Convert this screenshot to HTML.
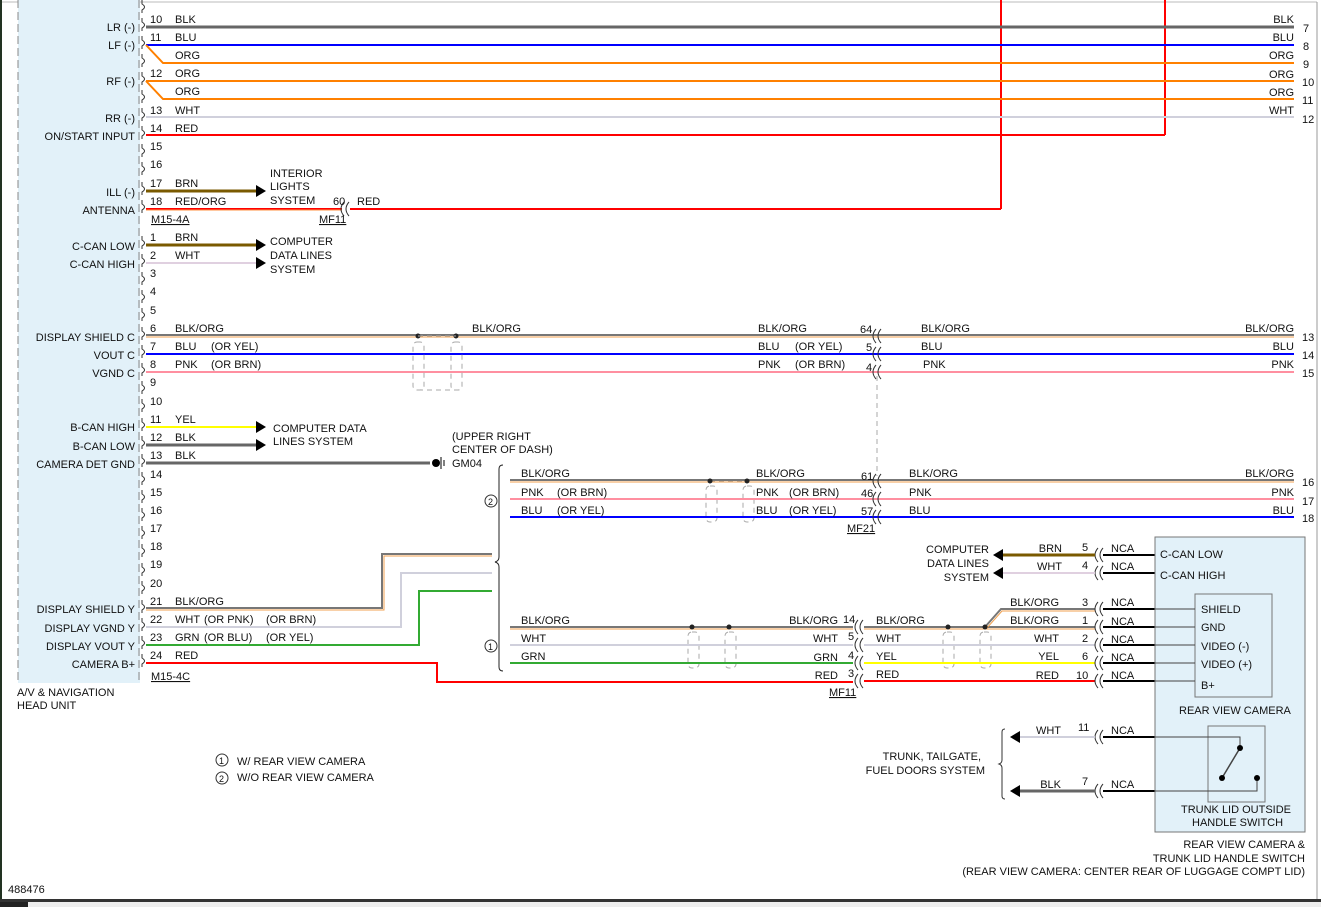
<!DOCTYPE html>
<html><head><meta charset="utf-8"><style>
html,body{margin:0;padding:0;background:#fff;}
svg{display:block}
text{font-family:"Liberation Sans",Arial,sans-serif;font-size:11px;fill:#111}
.r{text-anchor:end}
.u{text-decoration:underline}
</style></head><body>
<svg width="1321" height="907" viewBox="0 0 1321 907" xmlns="http://www.w3.org/2000/svg">
<defs>
<path id="p" d="M142,-9 v4 q5,3 0,6 v3" fill="none" stroke="#333" stroke-width="1"/>
<g id="c" fill="none" stroke="#333" stroke-width="1"><path d="M-1,-7 q-6,7 0,14"/><path d="M4,-7 q-6,7 0,14"/></g>
<polygon id="ar" points="0,-6 10,0 0,6" fill="#000"/>
<polygon id="al" points="0,-6 -10,0 0,6" fill="#000"/>
</defs>
<rect x="0" y="0" width="1321" height="907" fill="#fff"/>
<line x1="1" y1="0" x2="1" y2="900" stroke="#223322" stroke-width="2"/>
<line x1="2" y1="2" x2="1317" y2="2" stroke="#bbb"/>
<line x1="1317" y1="2" x2="1317" y2="900" stroke="#999"/>
<rect x="0" y="899" width="1321" height="3" fill="#333"/>
<rect x="0" y="902" width="28" height="5" fill="#222"/>
<rect x="28" y="902" width="1293" height="5" fill="#eee"/>

<!-- head unit -->
<rect x="18" y="0" width="122" height="683" fill="#e2f1f9"/>
<line x1="18" y1="0" x2="18" y2="683" stroke="#888" stroke-dasharray="8,4"/>
<line x1="139" y1="0" x2="139" y2="683" stroke="#888" stroke-dasharray="8,4"/>
<text x="17" y="696">A/V &amp; NAVIGATION</text>
<text x="17" y="709">HEAD UNIT</text>

<!-- pins top connector -->
<g>
<use href="#p" y="9"/><use href="#p" y="27"/><use href="#p" y="45"/><use href="#p" y="63"/><use href="#p" y="81"/><use href="#p" y="99"/><use href="#p" y="117"/><use href="#p" y="135"/><use href="#p" y="153"/><use href="#p" y="171"/><use href="#p" y="191"/><use href="#p" y="209"/>
<use href="#p" y="245"/><use href="#p" y="263"/><use href="#p" y="281"/><use href="#p" y="299"/><use href="#p" y="317"/><use href="#p" y="336"/><use href="#p" y="354"/><use href="#p" y="372"/><use href="#p" y="390"/><use href="#p" y="408"/><use href="#p" y="427"/><use href="#p" y="445"/><use href="#p" y="463"/><use href="#p" y="481"/><use href="#p" y="499"/><use href="#p" y="517"/><use href="#p" y="535"/><use href="#p" y="553"/><use href="#p" y="572"/><use href="#p" y="590"/><use href="#p" y="609"/><use href="#p" y="627"/><use href="#p" y="645"/><use href="#p" y="663"/>
</g>

<!-- top wires -->
<line x1="1001" y1="0" x2="1001" y2="209" stroke="#f00" stroke-width="2"/>
<line x1="1165" y1="0" x2="1165" y2="135" stroke="#f00" stroke-width="2"/>
<line x1="146" y1="27" x2="1294" y2="27" stroke="#666" stroke-width="3"/>
<line x1="146" y1="45" x2="1294" y2="45" stroke="#00f" stroke-width="2"/>
<polyline points="146,45 163,63 1294,63" fill="none" stroke="#ff8000" stroke-width="2"/>
<line x1="146" y1="81" x2="1294" y2="81" stroke="#ff8000" stroke-width="2"/>
<polyline points="146,81 163,99 1294,99" fill="none" stroke="#ff8000" stroke-width="2"/>
<line x1="146" y1="117" x2="1294" y2="117" stroke="#d0d0dc" stroke-width="2"/>
<polyline points="146,135 1165,135" fill="none" stroke="#f00" stroke-width="2"/>
<line x1="146" y1="191" x2="256" y2="191" stroke="#7a5a00" stroke-width="3"/>
<use href="#ar" x="256" y="191"/>
<line x1="146" y1="209" x2="342" y2="209" stroke="#f00" stroke-width="2"/>
<line x1="146" y1="210" x2="342" y2="210" stroke="#ff9040" stroke-width="1"/>
<line x1="350" y1="209" x2="1001" y2="209" stroke="#f00" stroke-width="2"/>
<use href="#c" x="345" y="209"/>

<text x="150" y="23">10</text><text x="175" y="23">BLK</text>
<text x="150" y="41">11</text><text x="175" y="41">BLU</text>
<text x="175" y="59">ORG</text>
<text x="150" y="77">12</text><text x="175" y="77">ORG</text>
<text x="175" y="95">ORG</text>
<text x="150" y="114">13</text><text x="175" y="114">WHT</text>
<text x="150" y="132">14</text><text x="175" y="132">RED</text>
<text x="150" y="150">15</text><text x="150" y="168">16</text>
<text x="150" y="187">17</text><text x="175" y="187">BRN</text>
<text x="150" y="205">18</text><text x="175" y="205">RED/ORG</text>
<text x="151" y="223" class="u">M15-4A</text>
<text x="270" y="177">INTERIOR</text><text x="270" y="190">LIGHTS</text><text x="270" y="204">SYSTEM</text>
<text x="333" y="205">60</text><text x="357" y="205">RED</text>
<text x="319" y="223" class="u">MF11</text>

<text x="135" y="31" class="r">LR (-)</text>
<text x="135" y="49" class="r">LF (-)</text>
<text x="135" y="85" class="r">RF (-)</text>
<text x="135" y="122" class="r">RR (-)</text>
<text x="135" y="140" class="r">ON/START INPUT</text>
<text x="135" y="196" class="r">ILL (-)</text>
<text x="135" y="214" class="r">ANTENNA</text>

<text x="1294" y="23" class="r">BLK</text><text x="1303" y="32">7</text>
<text x="1294" y="41" class="r">BLU</text><text x="1303" y="50">8</text>
<text x="1294" y="59" class="r">ORG</text><text x="1303" y="68">9</text>
<text x="1294" y="78" class="r">ORG</text><text x="1302" y="86">10</text>
<text x="1294" y="96" class="r">ORG</text><text x="1302" y="104">11</text>
<text x="1294" y="114" class="r">WHT</text><text x="1302" y="123">12</text>

<!-- second connector -->
<line x1="146" y1="245" x2="256" y2="245" stroke="#7a5a00" stroke-width="3"/><use href="#ar" x="256" y="245"/>
<line x1="146" y1="263" x2="256" y2="263" stroke="#e0d0e0" stroke-width="2"/><use href="#ar" x="256" y="263"/>
<text x="150" y="241">1</text><text x="175" y="241">BRN</text>
<text x="150" y="259">2</text><text x="175" y="259">WHT</text>
<text x="150" y="277">3</text><text x="150" y="295">4</text><text x="150" y="314">5</text>
<text x="270" y="245">COMPUTER</text><text x="270" y="259">DATA LINES</text><text x="270" y="273">SYSTEM</text>
<text x="135" y="250" class="r">C-CAN LOW</text>
<text x="135" y="268" class="r">C-CAN HIGH</text>

<!-- display C -->
<line x1="146" y1="335" x2="1294" y2="335" stroke="#777" stroke-width="2"/>
<line x1="146" y1="337" x2="1294" y2="337" stroke="#f0a050" stroke-width="1"/>
<line x1="146" y1="354" x2="1294" y2="354" stroke="#00f" stroke-width="2"/>
<line x1="146" y1="372" x2="1294" y2="372" stroke="#ff8fa0" stroke-width="2"/>
<circle cx="418" cy="336" r="2.5" fill="#222"/><circle cx="456" cy="336" r="2.5" fill="#222"/>
<g fill="none" stroke="#aaa" stroke-dasharray="5,4">
<line x1="418" y1="336" x2="456" y2="336"/>
<rect x="413" y="342" width="11" height="48" rx="4"/><rect x="451" y="342" width="11" height="48" rx="4"/>
<line x1="418" y1="390" x2="456" y2="390"/>
<line x1="877" y1="376" x2="877" y2="476"/>
<rect x="706" y="486" width="11" height="36" rx="4"/><rect x="743" y="486" width="11" height="36" rx="4"/>
<line x1="710" y1="481" x2="747" y2="481"/>
<rect x="688" y="632" width="11" height="36" rx="4"/><rect x="725" y="632" width="11" height="36" rx="4"/>
<line x1="692" y1="627" x2="729" y2="627"/>
<rect x="943" y="632" width="11" height="36" rx="4"/><rect x="980" y="632" width="11" height="36" rx="4"/>
<line x1="948" y1="627" x2="985" y2="627"/>
</g>
<use href="#c" x="877" y="336"/><use href="#c" x="877" y="354"/><use href="#c" x="877" y="372"/>
<text x="150" y="332">6</text><text x="175" y="332">BLK/ORG</text>
<text x="150" y="350">7</text><text x="175" y="350">BLU</text><text x="211" y="350">(OR YEL)</text>
<text x="150" y="368">8</text><text x="175" y="368">PNK</text><text x="211" y="368">(OR BRN)</text>
<text x="150" y="386">9</text><text x="150" y="405">10</text>
<text x="472" y="332">BLK/ORG</text>
<text x="758" y="332">BLK/ORG</text><text x="860" y="333">64</text>
<text x="758" y="350">BLU</text><text x="795" y="350">(OR YEL)</text><text x="866" y="351">5</text>
<text x="758" y="368">PNK</text><text x="795" y="368">(OR BRN)</text><text x="866" y="371">4</text>
<text x="921" y="332">BLK/ORG</text><text x="921" y="350">BLU</text><text x="923" y="368">PNK</text>
<text x="1294" y="332" class="r">BLK/ORG</text><text x="1302" y="341">13</text>
<text x="1294" y="350" class="r">BLU</text><text x="1302" y="359">14</text>
<text x="1294" y="368" class="r">PNK</text><text x="1302" y="377">15</text>
<text x="135" y="341" class="r">DISPLAY SHIELD C</text>
<text x="135" y="359" class="r">VOUT C</text>
<text x="135" y="377" class="r">VGND C</text>

<!-- B-CAN -->
<line x1="146" y1="427" x2="256" y2="427" stroke="#ff0" stroke-width="2"/><use href="#ar" x="256" y="427"/>
<line x1="146" y1="445" x2="256" y2="445" stroke="#666" stroke-width="3"/><use href="#ar" x="256" y="445"/>
<line x1="146" y1="463" x2="430" y2="463" stroke="#666" stroke-width="3"/>
<circle cx="436" cy="463" r="4" fill="#000"/><line x1="441" y1="457" x2="441" y2="469" stroke="#000"/><line x1="444" y1="460" x2="444" y2="466" stroke="#000"/>
<text x="452" y="440">(UPPER RIGHT</text><text x="452" y="453">CENTER OF DASH)</text><text x="452" y="467">GM04</text>
<text x="150" y="423">11</text><text x="175" y="423">YEL</text>
<text x="150" y="441">12</text><text x="175" y="441">BLK</text>
<text x="150" y="459">13</text><text x="175" y="459">BLK</text>
<text x="273" y="432">COMPUTER DATA</text><text x="273" y="445">LINES SYSTEM</text>
<text x="135" y="431" class="r">B-CAN HIGH</text>
<text x="135" y="450" class="r">B-CAN LOW</text>
<text x="135" y="468" class="r">CAMERA DET GND</text>
<text x="150" y="478">14</text><text x="150" y="496">15</text><text x="150" y="514">16</text><text x="150" y="532">17</text><text x="150" y="550">18</text><text x="150" y="568">19</text><text x="150" y="587">20</text>

<!-- option 2 -->
<line x1="510" y1="480" x2="1294" y2="480" stroke="#777" stroke-width="2"/>
<line x1="510" y1="482" x2="1294" y2="482" stroke="#f0a050" stroke-width="1"/>
<line x1="510" y1="499" x2="1294" y2="499" stroke="#ff8fa0" stroke-width="2"/>
<line x1="510" y1="517" x2="1294" y2="517" stroke="#00f" stroke-width="2"/>
<circle cx="710" cy="481" r="2.5" fill="#222"/><circle cx="747" cy="481" r="2.5" fill="#222"/>
<use href="#c" x="877" y="481"/><use href="#c" x="877" y="499"/><use href="#c" x="877" y="517"/>
<text x="521" y="477">BLK/ORG</text>
<text x="521" y="496">PNK</text><text x="557" y="496">(OR BRN)</text>
<text x="521" y="514">BLU</text><text x="557" y="514">(OR YEL)</text>
<text x="756" y="477">BLK/ORG</text>
<text x="756" y="496">PNK</text><text x="789" y="496">(OR BRN)</text>
<text x="756" y="514">BLU</text><text x="789" y="514">(OR YEL)</text>
<text x="861" y="480">61</text><text x="861" y="497">46</text><text x="861" y="515">57</text>
<text x="847" y="532" class="u">MF21</text>
<text x="909" y="477">BLK/ORG</text><text x="909" y="496">PNK</text><text x="909" y="514">BLU</text>
<text x="1294" y="477" class="r">BLK/ORG</text><text x="1302" y="486">16</text>
<text x="1294" y="496" class="r">PNK</text><text x="1302" y="505">17</text>
<text x="1294" y="514" class="r">BLU</text><text x="1302" y="522">18</text>
<path d="M503,465 q-4,0 -4,4 v88 q0,4 -4,5 q4,1 4,5 v100 q0,4 4,4" fill="none" stroke="#222"/>
<circle cx="491" cy="501" r="6" fill="none" stroke="#333"/><text x="488" y="505" style="font-size:9px">2</text>
<circle cx="491" cy="646" r="6" fill="none" stroke="#333"/><text x="488" y="650" style="font-size:9px">1</text>

<!-- display Y -->
<polyline points="146,608 382,608 382,554 492,554" fill="none" stroke="#777" stroke-width="2"/>
<polyline points="146,610 384,610 384,556 492,556" fill="none" stroke="#f0a050" stroke-width="1"/>
<polyline points="146,627 401,627 401,573 492,573" fill="none" stroke="#d0d0dc" stroke-width="2"/>
<polyline points="146,645 419,645 419,591 492,591" fill="none" stroke="#3a3" stroke-width="2"/>
<polyline points="146,663 437,663 437,682 853,682" fill="none" stroke="#f00" stroke-width="2"/>
<text x="150" y="605">21</text><text x="175" y="605">BLK/ORG</text>
<text x="150" y="623">22</text><text x="175" y="623">WHT</text><text x="204" y="623">(OR PNK)</text><text x="266" y="623">(OR BRN)</text>
<text x="150" y="641">23</text><text x="175" y="641">GRN</text><text x="204" y="641">(OR BLU)</text><text x="266" y="641">(OR YEL)</text>
<text x="150" y="659">24</text><text x="175" y="659">RED</text>
<text x="151" y="680" class="u">M15-4C</text>
<text x="135" y="613" class="r">DISPLAY SHIELD Y</text>
<text x="135" y="632" class="r">DISPLAY VGND Y</text>
<text x="135" y="650" class="r">DISPLAY VOUT Y</text>
<text x="135" y="668" class="r">CAMERA B+</text>

<!-- option 1 -->
<line x1="510" y1="627" x2="853" y2="627" stroke="#777" stroke-width="2"/>
<line x1="510" y1="629" x2="853" y2="629" stroke="#f0a050" stroke-width="1"/>
<line x1="510" y1="645" x2="853" y2="645" stroke="#d0d0dc" stroke-width="2"/>
<line x1="510" y1="663" x2="853" y2="663" stroke="#3a3" stroke-width="2"/>
<circle cx="692" cy="627" r="2.5" fill="#222"/><circle cx="729" cy="627" r="2.5" fill="#222"/>
<use href="#c" x="859" y="627"/><use href="#c" x="859" y="645"/><use href="#c" x="859" y="663"/><use href="#c" x="859" y="681"/>
<text x="521" y="624">BLK/ORG</text><text x="521" y="642">WHT</text><text x="521" y="660">GRN</text>
<text x="838" y="624" class="r">BLK/ORG</text><text x="843" y="623">14</text>
<text x="838" y="642" class="r">WHT</text><text x="848" y="640">5</text>
<text x="838" y="661" class="r">GRN</text><text x="848" y="659">4</text>
<text x="838" y="679" class="r">RED</text><text x="848" y="677">3</text>
<text x="829" y="696" class="u">MF11</text>
<line x1="864" y1="627" x2="1095" y2="627" stroke="#777" stroke-width="2"/>
<line x1="864" y1="629" x2="1095" y2="629" stroke="#f0a050" stroke-width="1"/>
<polyline points="985,627 1001,609 1095,609" fill="none" stroke="#777" stroke-width="2"/>
<polyline points="986,629 1002,611 1095,611" fill="none" stroke="#f0a050" stroke-width="1"/>
<line x1="864" y1="645" x2="1095" y2="645" stroke="#d0d0dc" stroke-width="2"/>
<line x1="864" y1="663" x2="1095" y2="663" stroke="#ff0" stroke-width="2"/>
<line x1="864" y1="681" x2="1095" y2="681" stroke="#f00" stroke-width="2"/>
<circle cx="948" cy="627" r="2.5" fill="#222"/><circle cx="985" cy="627" r="2.5" fill="#222"/>
<text x="876" y="624">BLK/ORG</text><text x="876" y="642">WHT</text><text x="876" y="660">YEL</text><text x="876" y="678">RED</text>
<text x="1059" y="606" class="r">BLK/ORG</text><text x="1082" y="606">3</text>
<text x="1059" y="624" class="r">BLK/ORG</text><text x="1082" y="624">1</text>
<text x="1059" y="642" class="r">WHT</text><text x="1082" y="642">2</text>
<text x="1059" y="660" class="r">YEL</text><text x="1082" y="660">6</text>
<text x="1059" y="679" class="r">RED</text><text x="1076" y="679">10</text>

<!-- camera connectors -->
<use href="#c" x="1099" y="555"/><use href="#c" x="1099" y="573"/>
<use href="#c" x="1099" y="609"/><use href="#c" x="1099" y="627"/><use href="#c" x="1099" y="645"/><use href="#c" x="1099" y="663"/><use href="#c" x="1099" y="681"/>
<use href="#c" x="1099" y="737"/><use href="#c" x="1099" y="791"/>
<g stroke="#000" stroke-width="2">
<line x1="1103" y1="555" x2="1155" y2="555"/><line x1="1103" y1="573" x2="1155" y2="573"/>
<line x1="1103" y1="609" x2="1155" y2="609"/><line x1="1103" y1="627" x2="1155" y2="627"/><line x1="1103" y1="645" x2="1155" y2="645"/><line x1="1103" y1="663" x2="1155" y2="663"/><line x1="1103" y1="681" x2="1155" y2="681"/>
<line x1="1103" y1="737" x2="1155" y2="737"/><line x1="1103" y1="791" x2="1155" y2="791"/>
</g>
<g fill="#111"><text x="1111" y="552">NCA</text><text x="1111" y="570">NCA</text><text x="1111" y="606">NCA</text><text x="1111" y="625">NCA</text><text x="1111" y="643">NCA</text><text x="1111" y="661">NCA</text><text x="1111" y="679">NCA</text><text x="1111" y="734">NCA</text><text x="1111" y="788">NCA</text></g>
<line x1="1003" y1="555" x2="1095" y2="555" stroke="#7a5a00" stroke-width="3"/><use href="#al" x="1003" y="555"/>
<line x1="1003" y1="573" x2="1095" y2="573" stroke="#e0d0e0" stroke-width="2"/><use href="#al" x="1003" y="573"/>
<text x="1062" y="552" class="r">BRN</text><text x="1082" y="551">5</text>
<text x="1062" y="570" class="r">WHT</text><text x="1082" y="569">4</text>
<text x="989" y="553" class="r">COMPUTER</text><text x="989" y="567" class="r">DATA LINES</text><text x="989" y="581" class="r">SYSTEM</text>

<rect x="1155" y="537" width="150" height="295" fill="#e2f1f9" stroke="#777"/>
<rect x="1195" y="594" width="77" height="103" fill="#e2f1f9" stroke="#777"/>
<rect x="1208" y="726" width="57" height="76" fill="#e2f1f9" stroke="#777"/>
<g stroke="#444" stroke-width="1">
<line x1="1155" y1="609" x2="1195" y2="609"/><line x1="1155" y1="627" x2="1195" y2="627"/><line x1="1155" y1="645" x2="1195" y2="645"/><line x1="1155" y1="663" x2="1195" y2="663"/><line x1="1155" y1="681" x2="1195" y2="681"/>
<polyline points="1155,737 1240,737 1240,748" fill="none"/>
<polyline points="1155,791 1257,791 1257,778" fill="none"/>
<line x1="1240" y1="748" x2="1222" y2="778" stroke-width="1.5"/>
</g>
<circle cx="1240" cy="748" r="3" fill="#000"/><circle cx="1222" cy="778" r="3" fill="#000"/><circle cx="1257" cy="778" r="3" fill="#000"/>
<text x="1160" y="558">C-CAN LOW</text><text x="1160" y="579">C-CAN HIGH</text>
<text x="1201" y="613">SHIELD</text><text x="1201" y="631">GND</text><text x="1201" y="650">VIDEO (-)</text><text x="1201" y="668">VIDEO (+)</text><text x="1201" y="689">B+</text>
<text x="1179" y="714">REAR VIEW CAMERA</text>
<text x="1181" y="813">TRUNK LID OUTSIDE</text><text x="1192" y="826">HANDLE SWITCH</text>
<text x="1305" y="848" class="r">REAR VIEW CAMERA &amp;</text>
<text x="1305" y="862" class="r">TRUNK LID HANDLE SWITCH</text>
<text x="1305" y="875" class="r">(REAR VIEW CAMERA: CENTER REAR OF LUGGAGE COMPT LID)</text>

<!-- trunk -->
<line x1="1020" y1="737" x2="1095" y2="737" stroke="#d0d0dc" stroke-width="2"/><use href="#al" x="1020" y="737"/>
<line x1="1020" y1="791" x2="1095" y2="791" stroke="#666" stroke-width="3"/><use href="#al" x="1020" y="791"/>
<text x="1061" y="734" class="r">WHT</text><text x="1078" y="731">11</text>
<text x="1061" y="788" class="r">BLK</text><text x="1082" y="785">7</text>
<path d="M1005,729 q-3,0 -3,3 v28 q0,3 -3,4 q3,1 3,4 v28 q0,3 3,3" fill="none" stroke="#333"/>
<text x="981" y="760" class="r">TRUNK, TAILGATE,</text><text x="985" y="774" class="r">FUEL DOORS SYSTEM</text>

<!-- legend -->
<circle cx="222" cy="760" r="6" fill="none" stroke="#333"/><text x="219" y="764" style="font-size:9px">1</text>
<text x="237" y="765">W/ REAR VIEW CAMERA</text>
<circle cx="222" cy="778" r="6" fill="none" stroke="#333"/><text x="219" y="782" style="font-size:9px">2</text>
<text x="237" y="781">W/O REAR VIEW CAMERA</text>
<text x="8" y="893">488476</text>
</svg>
</body></html>
